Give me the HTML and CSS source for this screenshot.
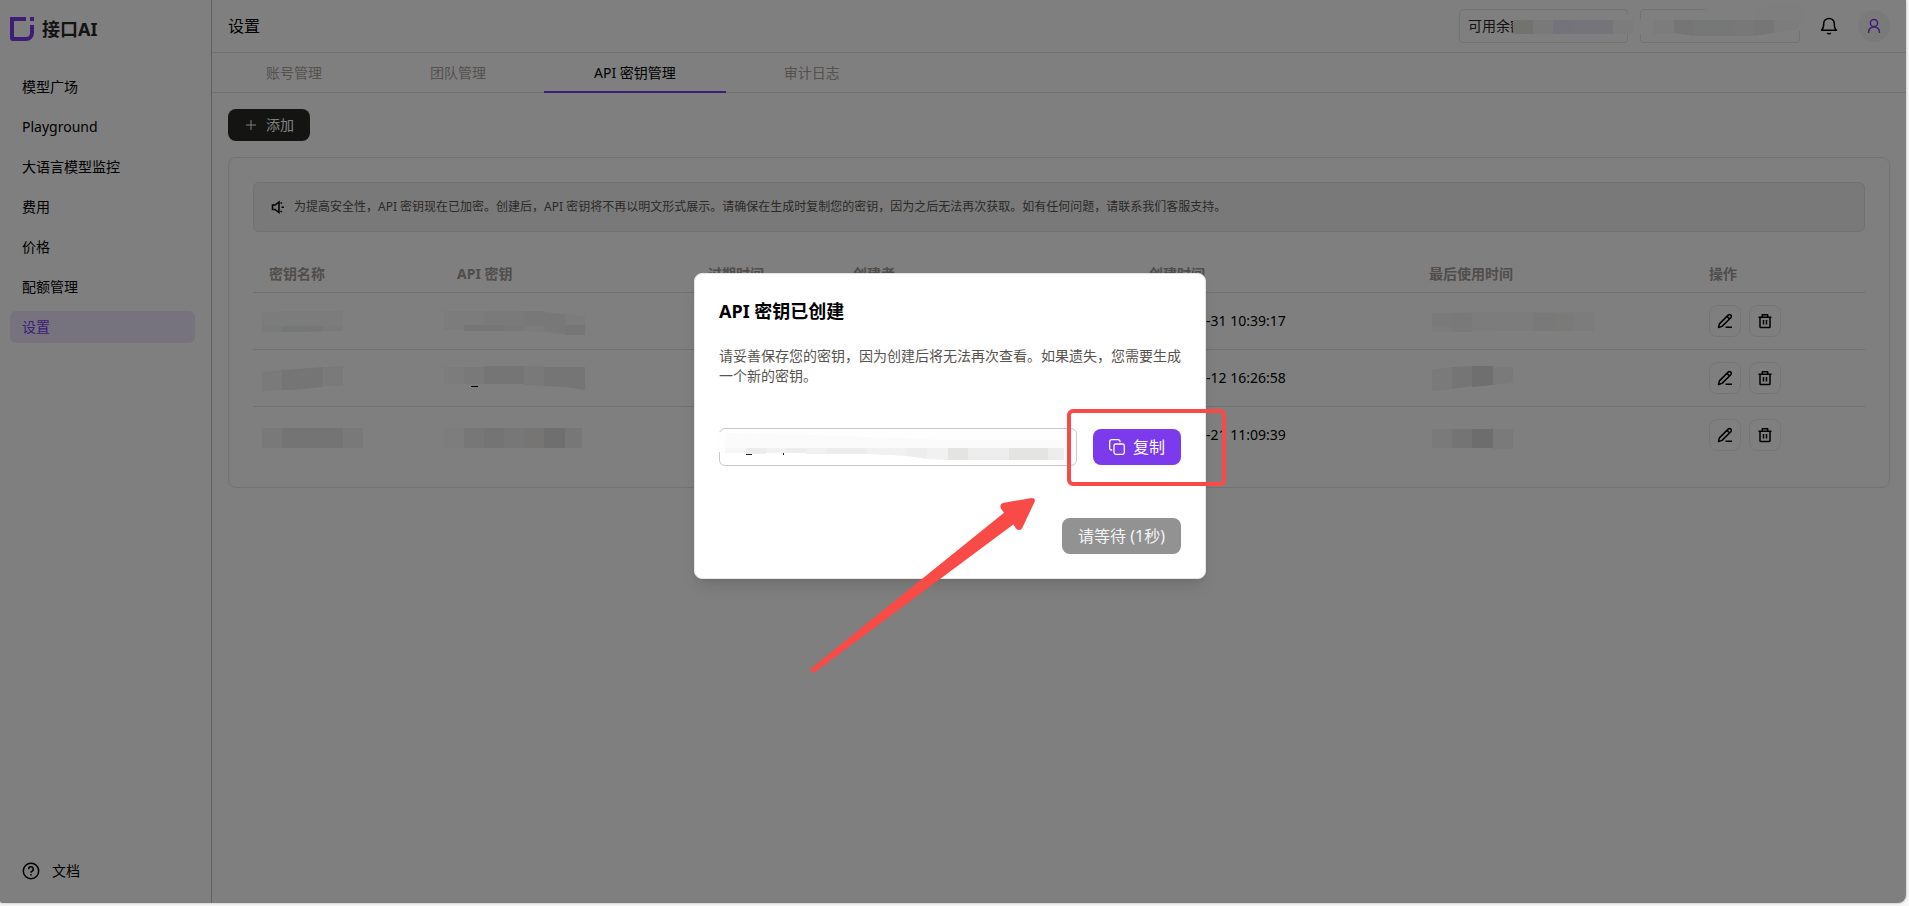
FILE: index.html
```html
<!DOCTYPE html>
<html lang="zh-CN">
<head>
    <meta charset="UTF-8">
    <meta name="viewport" content="width=device-width, initial-scale=1.0">
    <title>设置 - 接口AI</title>
    <link rel="stylesheet" href="styles.css">
</head>
<body>
    <!-- Shared icons -->
    <svg class="sprite" aria-hidden="true">
        <symbol id="icon-edit" viewBox="0 0 16 16">
            <path d="M1.5 14.5l.9-3.6L11.2 2.100a1.700 1.700 0 0 1 2.600 2.600L5 13.400z M10 3.400l2.600 2.600 M8.500 14.300H15" fill="none" stroke="currentColor" stroke-width="1.500" stroke-linejoin="round"/>
        </symbol>
        <symbol id="icon-trash" viewBox="0 0 16 16">
            <path d="M1.500 4.300h13 M5.300 4V1.700h5.400V4 M3 4.500v9.200c0 .5.300.8.800.8h8.400c.5 0 .8-.3.800-.8V4.500 M6.500 7v4.500 M9.500 7v4.500" fill="none" stroke="currentColor" stroke-width="1.500" stroke-linejoin="round"/>
        </symbol>
    </svg>

    <div class="app">
        <aside class="sidebar">
            <div class="logo">
                <svg width="24" height="24" viewBox="0 0 24 24">
                    <path d="M0 0h16v4H4v16h12a4 4 0 0 0 4-4V8h4v8a8 8 0 0 1-8 8H3a3 3 0 0 1-3-3z M20 0h4v4h-4z" fill="#7c3aed"/>
                </svg>
                <span>接口AI</span>
            </div>
            <nav class="menu">
                <a href="#" class="menu-item">模型广场</a>
                <a href="#" class="menu-item">Playground</a>
                <a href="#" class="menu-item">大语言模型监控</a>
                <a href="#" class="menu-item">费用</a>
                <a href="#" class="menu-item">价格</a>
                <a href="#" class="menu-item">配额管理</a>
                <a href="#" class="menu-item active">设置</a>
            </nav>
            <a href="#" class="menu-item docs">
                <svg width="18" height="18" viewBox="0 0 18 18" fill="none" stroke="currentColor" stroke-width="1.500">
                    <circle cx="9" cy="9" r="7.700"/>
                    <path d="M6.700 7.200a2.300 2.300 0 1 1 3.300 2c-.7.300-1 .7-1 1.500"/>
                    <path d="M9 12v1.500"/>
                </svg>
                <span>文档</span>
            </a>
        </aside>

        <main class="main">
            <header class="header">
                <h1 class="page-title">设置</h1>
                <div class="header-right">
                    <div class="balance">
                        可用余额
                        <svg class="mask" width="169" height="34">
                            <rect x="54" y="5" width="125" height="20" fill="#fff"/>
                            <rect x="54" y="11" width="20" height="14" fill="#e4e4de"/>
                            <rect x="74" y="11" width="20" height="14" fill="#f3f3f3"/>
                            <rect x="94" y="11" width="20" height="14" fill="#e8e5f6"/>
                            <rect x="114" y="11" width="40" height="14" fill="#ebe8f7"/>
                            <rect x="154" y="11" width="20" height="14" fill="#f8f8f8"/>
                        </svg>
                    </div>
                    <div class="account">
                        <svg class="mask" width="160" height="34">
                            <path d="M-6 11L75-1l90-3v24l-20 5H-6z" fill="#fff"/>
                            <path d="M115 0l15-3h36v18l-20 8h-31z" fill="#fcfcfc"/>
                            <rect x="13" y="11" width="21" height="14" fill="#f8f8f8"/>
                            <path d="M34 11h20v16l-20-3z" fill="#eaeaea"/>
                            <rect x="54" y="11" width="40" height="16" fill="#edf0ef"/>
                            <rect x="94" y="11" width="20" height="16" fill="#f0f0f0"/>
                            <path d="M114 11h20v13l-20 3z" fill="#ededed"/>
                            <path d="M134 11h25v9l-25 4z" fill="#f8f8f8"/>
                        </svg>
                    </div>
                    <button class="icon-plain" aria-label="通知">
                        <svg width="18" height="18" viewBox="0 0 18 18" fill="none" stroke="currentColor" stroke-width="1.500" stroke-linejoin="round">
                            <path d="M1.500 13.300h15c-1.600-1.300-2.200-3-2.200-6.500C14.300 3.500 12 1.500 9 1.500S3.700 3.500 3.700 6.800c0 3.500-.6 5.200-2.200 6.500z"/>
                            <path d="M7.200 16c.9 1 2.700 1 3.600 0"/>
                        </svg>
                    </button>
                    <button class="avatar" aria-label="账号">
                        <svg width="16" height="16" viewBox="0 0 16 16" fill="none" stroke="currentColor" stroke-width="1.500">
                            <circle cx="8" cy="5" r="3.600"/>
                            <path d="M2.500 15c0-4 2.400-6 5.500-6s5.500 2 5.500 6"/>
                        </svg>
                    </button>
                </div>
            </header>

            <nav class="tabs">
                <a href="#" class="tab">账号管理</a>
                <a href="#" class="tab">团队管理</a>
                <a href="#" class="tab active">API 密钥管理</a>
                <a href="#" class="tab">审计日志</a>
            </nav>

            <section class="content">
                <button class="btn-add">
                    <svg width="14" height="14" viewBox="0 0 14 14" stroke="currentColor" stroke-width="1"><path d="M7 2v10M2 7h10"/></svg>
                    添加
                </button>

                <div class="card">
                    <div class="notice">
                        <svg width="16" height="16" viewBox="0 0 16 16" fill="none" stroke="currentColor" stroke-width="1.500">
                            <path d="M2.500 6v4.500H5l4 3V3L5 6z"/>
                            <path d="M10.500 4.500l1.500-1M11.500 8.200h2.500M10.500 12l1.500 1"/>
                        </svg>
                        <p>为提高安全性，API 密钥现在已加密。创建后，API 密钥将不再以明文形式展示。请确保在生成时复制您的密钥，因为之后无法再次获取。如有任何问题，请联系我们客服支持。</p>
                    </div>

                    <table class="keys">
                        <colgroup>
                            <col class="col-name">
                            <col class="col-key">
                            <col class="col-expire">
                            <col class="col-creator">
                            <col class="col-time">
                            <col class="col-time">
                            <col class="col-action">
                        </colgroup>
                        <thead>
                            <tr>
                                <th>密钥名称</th>
                                <th>API 密钥</th>
                                <th>过期时间</th>
                                <th>创建者</th>
                                <th>创建时间</th>
                                <th>最后使用时间</th>
                                <th>操作</th>
                            </tr>
                        </thead>
                        <tbody>
                            <tr>
                                <td>
                                    <svg class="mosaic" width="80" height="32">
                                        <path d="M-7 8l20-2h61v20l-41 1h-40z" fill="#f8f8f8"/>
                                        <path d="M-7 21h20v6h-20z M54 21h20v5h-20z" fill="#f3f4f4"/>
                                        <path d="M13 21h41v5l-21 1H13z" fill="#ebeded"/>
                                    </svg>
                                </td>
                                <td>
                                    <svg class="mosaic" width="120" height="32">
                                        <path d="M-13 6h90l51 5v19h-20l-50-5h-71z" fill="#faf9f8"/>
                                        <path d="M27 6h40v15H27z" fill="#f5f5f5"/>
                                        <path d="M67 6h20v15H67z M87 7l21 2v20l-21-3z" fill="#f0f0f0"/>
                                        <path d="M7 20h40v6H7z M108 20h20v10h-20z" fill="#ececec"/>
                                        <path d="M47 20h20v6H47z" fill="#f2f1ee"/>
                                    </svg>
                                </td>
                                <td></td>
                                <td></td>
                                <td class="created">-31 10:39:17</td>
                                <td>
                                    <svg class="mosaic" width="160" height="32">
                                        <path d="M3 8l61-1h101v19H84l-81 1z" fill="#f8f8f8"/>
                                        <path d="M3 8h20v14H3z M125 8h20v18h-20z" fill="#f5f4f1"/>
                                        <path d="M23 8h20v19H23z M104 8h21v18h-21z" fill="#f2f2f2"/>
                                    </svg>
                                </td>
                                <td>
                                    <div class="actions">
                                        <button class="btn-icon" aria-label="编辑"><svg width="16" height="16"><use href="#icon-edit"/></svg></button>
                                        <button class="btn-icon" aria-label="删除"><svg width="16" height="16"><use href="#icon-trash"/></svg></button>
                                    </div>
                                </td>
                            </tr>
                            <tr>
                                <td>
                                    <svg class="mosaic" width="80" height="32">
                                        <path d="M-7 10l20-2v20l-20 2z M54 5l20-1v20H54z" fill="#f5f5f5"/>
                                        <path d="M13 8l41-3v20l-30 3H13z" fill="#ebebeb"/>
                                    </svg>
                                </td>
                                <td>
                                    <svg class="mosaic" width="120" height="32">
                                        <path d="M-13 5h20v17h-20z" fill="#faf9f8"/>
                                        <path d="M7 5h20v17H7z M67 4h20v20l-20-1z" fill="#f2f2f2"/>
                                        <path d="M27 4h40v18H27z M87 5h41v23l-20-3-21-1z" fill="#ebebeb"/>
                                        <path d="M14 24h7v1h-7z" fill="#000"/>
                                    </svg>
                                </td>
                                <td></td>
                                <td></td>
                                <td class="created">-12 16:26:58</td>
                                <td>
                                    <svg class="mosaic" width="160" height="32">
                                        <path d="M3 8l20-3v22l-20 2z M64 5h20v16l-20 2z" fill="#f4f4f4"/>
                                        <path d="M23 5l20-1v20l-20 3z" fill="#ebebeb"/>
                                        <path d="M43 4h21v19l-21 2z" fill="#dedede"/>
                                    </svg>
                                </td>
                                <td>
                                    <div class="actions">
                                        <button class="btn-icon" aria-label="编辑"><svg width="16" height="16"><use href="#icon-edit"/></svg></button>
                                        <button class="btn-icon" aria-label="删除"><svg width="16" height="16"><use href="#icon-trash"/></svg></button>
                                    </div>
                                </td>
                            </tr>
                            <tr>
                                <td>
                                    <svg class="mosaic" width="100" height="32">
                                        <path d="M-7 9h20v20h-20z M74 9h20v20H74z" fill="#f2f2f2"/>
                                        <path d="M13 9h61v20H13z" fill="#e8e9e9"/>
                                    </svg>
                                </td>
                                <td>
                                    <svg class="mosaic" width="120" height="32">
                                        <path d="M-13 9h20v20h-20z" fill="#fafafa"/>
                                        <path d="M7 9h20v20H7z M47 9h20v20H47z M108 9h17v20h-17z" fill="#efefef"/>
                                        <path d="M27 9h20v20H27z" fill="#e8e8e8"/>
                                        <path d="M67 9h20v20H67z" fill="#ecebe7"/>
                                        <path d="M87 9h21v20H87z" fill="#dedede"/>
                                    </svg>
                                </td>
                                <td></td>
                                <td></td>
                                <td class="created">-21 11:09:39</td>
                                <td>
                                    <svg class="mosaic" width="160" height="32">
                                        <path d="M3 10h20v19H3z M64 10h20v20H64z" fill="#f4f4f4"/>
                                        <path d="M23 10h20v19H23z" fill="#e8e8e8"/>
                                        <path d="M43 10h21v19H43z" fill="#dadada"/>
                                    </svg>
                                </td>
                                <td>
                                    <div class="actions">
                                        <button class="btn-icon" aria-label="编辑"><svg width="16" height="16"><use href="#icon-edit"/></svg></button>
                                        <button class="btn-icon" aria-label="删除"><svg width="16" height="16"><use href="#icon-trash"/></svg></button>
                                    </div>
                                </td>
                            </tr>
                        </tbody>
                    </table>
                </div>
            </section>
        </main>

        <!-- Key created dialog -->
        <div class="overlay">
            <div class="modal" role="dialog" aria-labelledby="modal-title">
                <h2 id="modal-title" class="modal-title">API 密钥已创建</h2>
                <p class="modal-text">请妥善保存您的密钥，因为创建后将无法再次查看。如果遗失，您需要生成一个新的密钥。</p>
                <div class="key-row">
                    <div class="key-field">
                        <input type="text" class="key-input" aria-label="API 密钥" readonly>
                        <svg class="mask" width="358" height="38">
                            <path d="M-2 4h348v17H140L-2 24z" fill="#fefefe"/>
                            <path d="M6 5l90 2 130 5h120v8H6z" fill="#fbfbfb"/>
                            <path d="M6 20h21v5H6z" fill="#f7f7f7"/>
                            <path d="M27 20h20v6H27z M67 20h20v5H67z M107 20h41v6h-41z M188 20h20v11l-20-3z M249 20h41v12h-41z M329 20h16v12h-16z" fill="#ededed"/>
                            <path d="M47 20h20v5H47z M87 20h20v6H87z M148 20h40v8l-40-2z M208 20h21v12l-21-1z" fill="#f1f1f1"/>
                            <path d="M229 20h20v12h-20z M290 20h39v12h-39z" fill="#e4e4e2"/>
                            <path d="M27 26h6v1h-6z M64 25h1v2h-1z" fill="#222"/>
                        </svg>
                    </div>
                    <button class="btn-copy">
                        <svg width="16" height="16" viewBox="0 0 16 16" fill="none" stroke="currentColor" stroke-width="1.300">
                            <rect x="5" y="5" width="10.300" height="10.300" rx="1.800"/>
                            <path d="M3.200 11H2.500A1.800 1.800 0 0 1 .7 9.200V2.500A1.800 1.800 0 0 1 2.500.7h6.700A1.800 1.800 0 0 1 11 2.500v.7"/>
                        </svg>
                        复制
                    </button>
                    <div class="highlight"></div>
                </div>
                <div class="modal-footer">
                    <button class="btn-wait" disabled>请等待 (1秒)</button>
                </div>
                <svg class="arrow" width="226" height="176" viewBox="0 0 226 176">
                    <path d="M0 171.300L194 14.700l-3-4q-2-5 3-6L221.500.100q4.500 0 3 4L212 30.500q-3 3-6 0l-2.700-4L3 175.500z" fill="#f84b47"/>
                </svg>
            </div>
        </div>
    </div>
</body>
</html>
```

FILE: styles.css
```css
* {
    box-sizing: border-box;
}
body {
    margin: 0;
    height: 100vh;
    padding: 0 3px 3px 0;
    background-color: #f7f7f7;
    font-family: "Noto Sans", "Noto Sans CJK SC", sans-serif;
    font-size: 14px;
    line-height: 20px;
    color: #000;
}
button, input {
    font: inherit;
    color: inherit;
}
button {
    padding: 0;
    border: none;
    background: none;
}
a {
    color: inherit;
    text-decoration: none;
}
h1, h2, p {
    margin: 0;
}
svg {
    display: block;
    flex-shrink: 0;
}
.sprite {
    position: absolute;
    width: 0;
    height: 0;
}
.app {
    position: relative;
    display: flex;
    height: 100%;
    background-color: #fff;
    border-radius: 0 0 8px 2px;
    overflow: hidden;
    box-shadow: 0 0 3px rgba(0, 0, 0, 0.3);
}

/* Sidebar */
.sidebar {
    display: flex;
    flex-direction: column;
    flex-shrink: 0;
    width: 212px;
    padding: 17px 16px 16px 10px;
    border-right: 1px solid #bfbfbf;
}
.logo {
    display: flex;
    align-items: center;
    gap: 8px;
    height: 24px;
    margin-bottom: 30px;
    font-size: 18px;
    font-weight: bold;
    color: #292524;
}
.menu {
    display: flex;
    flex-direction: column;
    gap: 8px;
}
.menu-item {
    display: flex;
    align-items: center;
    height: 32px;
    padding: 0 12px;
    border-radius: 6px;
}
.menu-item.active {
    background-color: #ece7fd;
    color: #7c3aed;
}
.docs {
    gap: 12px;
    margin-top: auto;
}

/* Header */
.main {
    flex: 1;
    min-width: 0;
}
.header {
    display: flex;
    align-items: center;
    justify-content: space-between;
    height: 53px;
    padding: 0 16px;
    border-bottom: 1px solid #e0e0e0;
}
.page-title {
    font-size: 16px;
    font-weight: normal;
}
.header-right {
    display: flex;
    align-items: center;
}
.balance, .account {
    position: relative;
    height: 34px;
    margin-right: 12px;
    padding: 6px 8px;
    border: 1px solid #e4e4e4;
    border-radius: 4px;
    color: #292524;
}
.balance {
    width: 169px;
}
.account {
    width: 160px;
    margin-right: 20px;
}
.mask {
    position: absolute;
    top: -1px;
    left: -1px;
    overflow: visible;
}
.icon-plain {
    margin-right: 20px;
}
.avatar {
    display: flex;
    align-items: center;
    justify-content: center;
    width: 32px;
    height: 32px;
    border-radius: 50%;
    background-color: #f5f5f5;
    color: #7c3aed;
}

/* Tabs */
.tabs {
    display: flex;
    gap: 8px;
    height: 40px;
    padding: 0 4px;
    border-bottom: 1px solid #e0e0e0;
}
.tab {
    height: 40px;
    padding: 10px 50px 0;
    color: #a8a29e;
}
.tab.active {
    border-bottom: 2px solid #7c3aed;
    color: #000;
}

/* Content */
.content {
    padding: 16px;
}
.btn-add {
    display: flex;
    align-items: center;
    gap: 8px;
    height: 32px;
    margin-bottom: 16px;
    padding: 0 16px;
    border-radius: 8px;
    background-color: #282824;
    color: #fff;
}
.card {
    padding: 24px;
    border: 1px solid #e5e5e5;
    border-radius: 8px;
}
.notice {
    display: flex;
    align-items: center;
    gap: 8px;
    height: 50px;
    margin-bottom: 24px;
    padding: 0 16px;
    border: 1px solid #e2e2e2;
    border-radius: 6px;
    background-color: #f2f2f2;
    font-size: 12px;
}
.notice p {
    color: #57534e;
}
.keys {
    width: 100%;
    table-layout: fixed;
    border-collapse: separate;
    border-spacing: 0;
}
.keys th {
    height: 37px;
    padding: 0 16px;
    border-bottom: 1px solid #e0e0e0;
    text-align: left;
    color: #a09a96;
}
.keys td {
    height: 57px;
    padding: 0 16px;
    border-bottom: 1px solid #e0e0e0;
}
.keys tr:last-child td {
    height: 56px;
    border-bottom: none;
}
.keys .created {
    padding-left: 73px;
}
.col-name {
    width: 188px;
}
.col-key {
    width: 251px;
}
.col-expire {
    width: 145px;
}
.col-creator {
    width: 296px;
}
.col-time {
    width: 280px;
}
.col-action {
    width: 172px;
}
.mosaic {
    overflow: visible;
}
.actions {
    display: flex;
    gap: 8px;
}
.btn-icon {
    display: flex;
    align-items: center;
    justify-content: center;
    width: 32px;
    height: 32px;
    border: 1px solid #ebebeb;
    border-radius: 8px;
}

/* Dialog */
.overlay {
    position: absolute;
    inset: 0;
    display: flex;
    justify-content: center;
    align-items: flex-start;
    padding: 273px 6px 0 0;
    background-color: rgba(0, 0, 0, 0.5);
}
.modal {
    position: relative;
    width: 512px;
    padding: 24px;
    border: 1px solid #e5e5e5;
    border-radius: 8px;
    background-color: #fff;
    box-shadow: 0 10px 15px -3px rgba(0, 0, 0, 0.1), 0 4px 6px -4px rgba(0, 0, 0, 0.1);
}
.modal-title {
    margin-bottom: 22px;
    font-size: 18px;
    line-height: 26px;
}
.modal-text {
    margin-bottom: 42px;
    color: #57534e;
}
.key-row {
    position: relative;
    display: flex;
    align-items: center;
    gap: 16px;
    margin-bottom: 52px;
}
.key-field {
    position: relative;
    flex: 1;
    height: 38px;
}
.key-field .mask {
    top: 0;
    left: 0;
}
.key-input {
    width: 100%;
    height: 38px;
    padding: 0 12px;
    border: 1px solid #c8c8c4;
    border-radius: 6px;
    background-color: #fff;
}
.btn-copy, .btn-wait {
    display: flex;
    align-items: center;
    gap: 8px;
    height: 36px;
    padding: 0 16px;
    border-radius: 8px;
    font-size: 16px;
    color: #fff;
}
.btn-copy {
    background-color: #7c3aed;
}
.btn-wait {
    background-color: #929292;
    color: #f4f4f4;
}
.modal-footer {
    display: flex;
    justify-content: flex-end;
}

/* Red marks over the dialog */
.highlight {
    position: absolute;
    top: -19px;
    right: -45px;
    width: 159px;
    height: 77px;
    border: 4px solid #f84b47;
    border-radius: 6px;
}
.arrow {
    position: absolute;
    top: 224px;
    left: 115px;
}
```
